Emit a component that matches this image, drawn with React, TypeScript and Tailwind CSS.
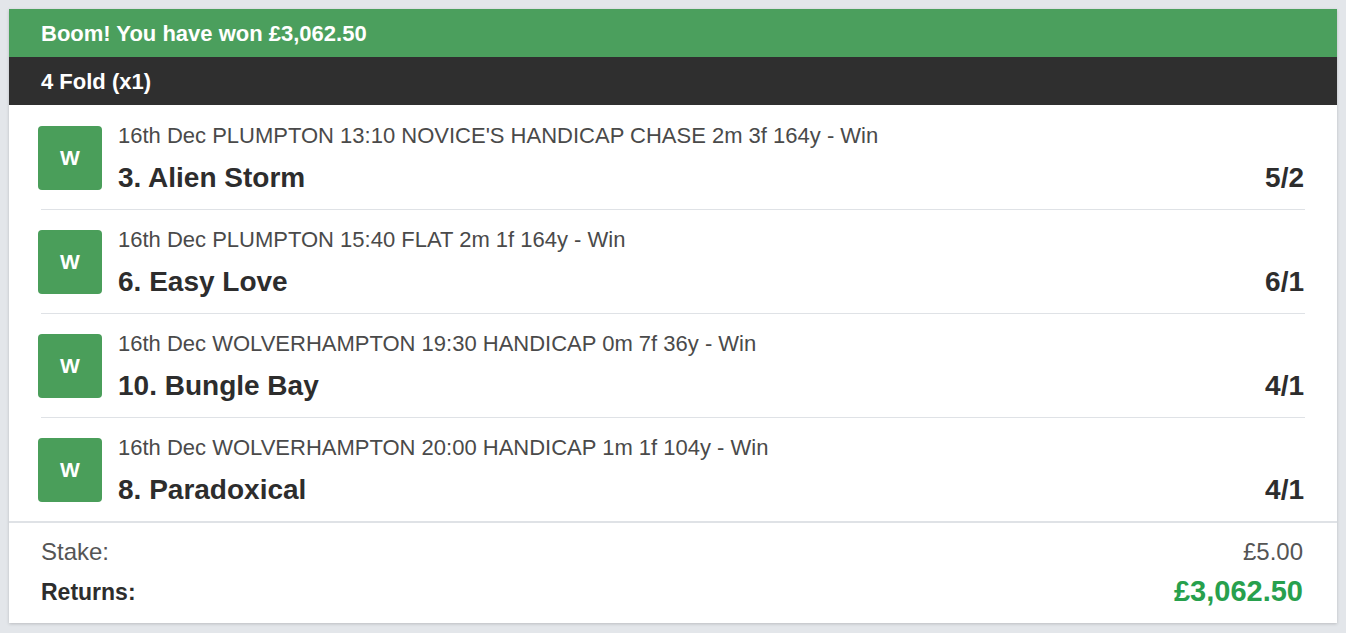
import React from "react";

const legs = [
  { meta: "16th Dec PLUMPTON 13:10 NOVICE'S HANDICAP CHASE 2m 3f 164y - Win", name: "3. Alien Storm", odds: "5/2" },
  { meta: "16th Dec PLUMPTON 15:40 FLAT 2m 1f 164y - Win", name: "6. Easy Love", odds: "6/1" },
  { meta: "16th Dec WOLVERHAMPTON 19:30 HANDICAP 0m 7f 36y - Win", name: "10. Bungle Bay", odds: "4/1" },
  { meta: "16th Dec WOLVERHAMPTON 20:00 HANDICAP 1m 1f 104y - Win", name: "8. Paradoxical", odds: "4/1" },
];

export default function App() {
  return (
    <div
      className="min-h-[633px] bg-[#e3e6ea] px-[9px] pt-[9px] pb-[10px]"
      style={{ fontFamily: '"Liberation Sans", Arial, sans-serif' }}
    >
      <div className="bg-white shadow-[0_1px_3px_rgba(0,0,0,0.18)]">
        <div className="h-[48px] bg-[#4b9f5d] px-[32px] flex items-center text-white font-bold text-[22px]">
          Boom! You have won £3,062.50
        </div>
        <div className="h-[48px] bg-[#2f2f2f] px-[32px] flex items-center text-white font-bold text-[22px]">
          4 Fold (x1)
        </div>
        <div className="pt-[1px]">
          {legs.map((leg, i) => (
            <div
              key={i}
              className={
                "mx-[32px] pt-[20px] flex items-stretch " +
                (i < legs.length - 1 ? "pb-[19px] border-b border-[#dfe2e6]" : "pb-[19px]")
              }
            >
              <div className="ml-[-3px] w-[64px] h-[64px] shrink-0 rounded-[4px] bg-[#4a9e5a] flex items-center justify-center text-white font-bold text-[21px]">
                W
              </div>
              <div className="ml-[16px] flex-1 h-[64px] flex flex-col justify-between">
                <div className="text-[22px] leading-[20px] text-[#4a4a4a] whitespace-nowrap">{leg.meta}</div>
                <div className="flex justify-between items-center">
                  <div className="text-[28px] leading-[24px] font-bold text-[#2d2d2d]">{leg.name}</div>
                  <div className="text-[28px] leading-[24px] font-bold text-[#2d2d2d] mr-[1px]">{leg.odds}</div>
                </div>
              </div>
            </div>
          ))}
        </div>
        <div className="border-t-2 border-[#dfe2e6] px-[32px] pt-[17px] pb-[19px] flex flex-col gap-[16px]">
          <div className="h-[24px] flex items-center justify-between">
            <span className="text-[24px] text-[#555555]">Stake:</span>
            <span className="text-[24px] text-[#555555] mr-[2px]">£5.00</span>
          </div>
          <div className="h-[24px] flex items-center justify-between">
            <span className="text-[23px] font-bold text-[#2d2d2d]">Returns:</span>
            <span className="text-[29px] font-bold text-[#27a04d] mr-[2px]">£3,062.50</span>
          </div>
        </div>
      </div>
    </div>
  );
}
